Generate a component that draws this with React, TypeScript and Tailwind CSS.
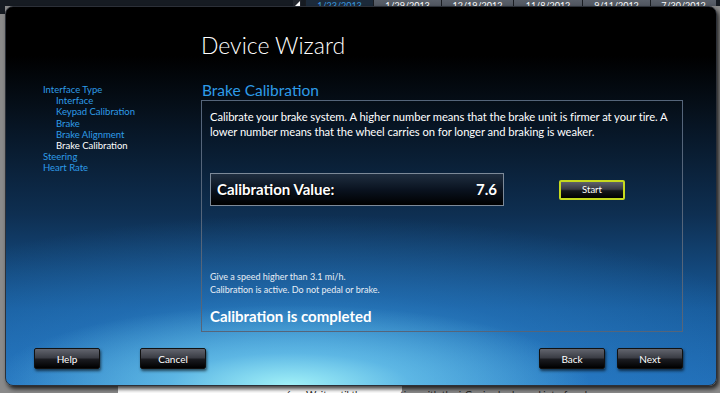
import { ReactNode } from "react";

const tabs = [
  { label: "1/23/2013", w: "w-[68px]", active: true },
  { label: "1/29/2013", w: "w-[68px]" },
  { label: "12/19/2012", w: "w-[72px]" },
  { label: "11/8/2012", w: "w-[69px]" },
  { label: "9/11/2012", w: "w-[68px]" },
  { label: "7/30/2012", w: "w-[66px]" },
];

const steps = [
  { label: "Interface Type", sub: false },
  { label: "Interface", sub: true },
  { label: "Keypad Calibration", sub: true },
  { label: "Brake", sub: true },
  { label: "Brake Alignment", sub: true },
  { label: "Brake Calibration", sub: true, current: true },
  { label: "Steering", sub: false },
  { label: "Heart Rate", sub: false },
];

function WizardButton({ children, className = "" }: { children: ReactNode; className?: string }) {
  return (
    <button
      className={
        "h-[21px] w-[66px] rounded-[2px] border border-[#111] bg-[linear-gradient(to_bottom,#62656e_0%,#3b3d45_45%,#1a1b20_55%,#000_100%)] text-[10px] leading-none text-white shadow-[1px_2px_3px_rgba(0,0,0,0.6)] " +
        className
      }
    >
      {children}
    </button>
  );
}

export default function App() {
  return (
    <div className="flex h-[393px] w-[720px] flex-col overflow-hidden bg-[#8a8a8a] font-['Lato',sans-serif]">
      {/* tab strip of the window behind */}
      <div className="flex h-[6px] shrink-0 overflow-hidden bg-[#161b22]">
        <div className="ml-[293px] flex h-[20px] w-[8px] items-start justify-center bg-[#23272e]">
          <div className="mt-[1px] h-0 w-0 border-b-[5px] border-l-[5px] border-b-white border-l-transparent" />
        </div>
        <div className="w-[4px]" />
        {tabs.map((t) => (
          <div
            key={t.label}
            className={
              "h-[20px] border-l border-[#1a1d22] pt-[1px] text-center text-[9px] leading-[10px] " +
              t.w +
              (t.active
                ? " bg-[#1c2a3a] text-[#3a9ae0]"
                : " bg-[linear-gradient(to_bottom,#5a606a,#3a3f47)] text-white")
            }
          >
            {t.label}
          </div>
        ))}
      </div>

      <div className="flex h-[380px] shrink-0">
        <div className="w-[5px] bg-[linear-gradient(to_bottom,#161b22_0px,#161b22_8px,#8a8a8a_8px)]" />
        <div className="relative flex h-[380px] w-[712px] flex-col rounded-[8px] border border-[#2c3038] bg-[radial-gradient(ellipse_300px_80px_at_40%_100%,#a0f0f7_0%,rgba(120,210,242,0.6)_40%,rgba(60,150,220,0)_100%),radial-gradient(ellipse_520px_170px_at_42%_100%,rgba(70,170,230,0.8)_0%,rgba(50,140,215,0.35)_55%,rgba(40,120,200,0)_100%),linear-gradient(to_bottom,#000_0%,#000_13%,#06111d_28%,#0e2f52_55%,#175a9a_80%,#1f6bb4_100%)] pt-[23px] shadow-[2px_3px_4px_rgba(0,0,0,0.75)]">
          <h1 className="pl-[195px] text-[23px] font-light leading-[30px] text-white">Device Wizard</h1>

          <div className="mt-[21px] flex">
            <nav className="w-[195px] shrink-0 pl-[37px] pt-[3px]">
              {steps.map((s) => (
                <div
                  key={s.label}
                  className={
                    "text-[9.5px] leading-[11.2px] " +
                    (s.sub ? "pl-[13px] " : "") +
                    (s.current ? "text-white" : "text-[#2e9ce8]")
                  }
                >
                  {s.label}
                </div>
              ))}
            </nav>

            <section className="w-[482px]">
              <h2 className="pl-[1px] text-[15.5px] leading-[19px] text-[#2e9ce8]">Brake Calibration</h2>
              <div className="h-[232px] border border-[#55657a] px-[8px] pt-[8px]">
                <p className="whitespace-nowrap text-[11.2px] leading-[15px] tracking-[-0.05px] text-white">
                  Calibrate your brake system. A higher number means that the brake unit is firmer at your tire. A
                  <br />
                  lower number means that the wheel carries on for longer and braking is weaker.
                </p>

                <div className="mt-[34px] flex items-center">
                  <div className="flex h-[33px] w-[294px] items-center justify-between border border-[#7d8a99] bg-[linear-gradient(to_bottom,#1f2e40_0%,#0a1320_50%,#000_100%)] px-[6px]">
                    <span className="text-[15px] font-bold text-white [text-shadow:1px_1px_1px_#000]">
                      Calibration Value:
                    </span>
                    <span className="text-[15px] font-bold text-white">7.6</span>
                  </div>
                  <button className="ml-[55px] h-[20px] w-[66px] rounded-[2px] border-2 border-[#c6d91e] bg-[linear-gradient(to_bottom,#5e616a_0%,#383a42_45%,#15161a_55%,#000_100%)] text-[9.5px] leading-none text-white">
                    Start
                  </button>
                </div>

                <div className="mt-[64px] text-[9px] leading-[13px] text-[#e8eef5]">
                  <div>Give a speed higher than 3.1 mi/h.</div>
                  <div>Calibration is active. Do not pedal or brake.</div>
                </div>
                <div className="mt-[10px] text-[15px] font-bold leading-[20px] text-white">Calibration is completed</div>
              </div>
            </section>
          </div>

          <div className="mt-[16px] flex pl-[28px] pr-[33px]">
            <WizardButton className="w-[65px]">Help</WizardButton>
            <WizardButton className="ml-[40px] w-[65px]">Cancel</WizardButton>
            <div className="flex-1" />
            <WizardButton>Back</WizardButton>
            <WizardButton className="ml-[12px]">Next</WizardButton>
          </div>
        </div>
        <div className="w-[3px]" />
      </div>

      {/* document behind the dialog */}
      <div className="flex h-[7px] shrink-0 overflow-hidden">
        <div className="w-[118px]" />
        <div className="flex h-[20px] w-[284px] bg-white pl-[155px] pt-[1px] text-[10px] text-[#222]">
          <span className="text-[#2e9ce8]">›</span>
          <span className="ml-[10px]">6.</span>
          <span className="ml-[12px] whitespace-nowrap">Wait until the connection with the i-Genius brake and interface has</span>
        </div>
      </div>
    </div>
  );
}
